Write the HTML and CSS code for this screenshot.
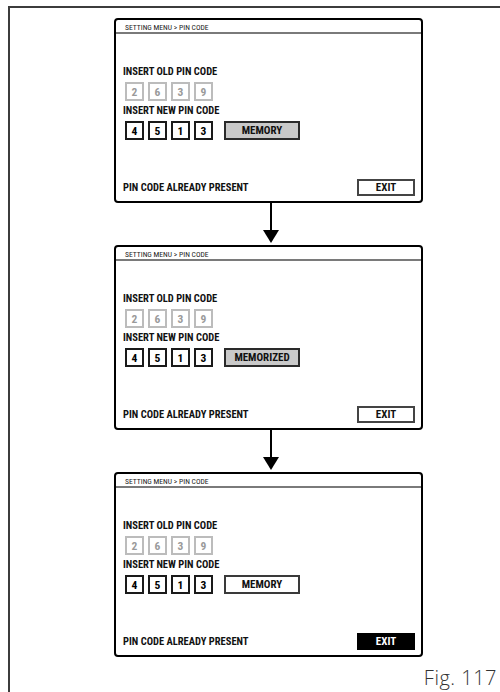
FILE: index.html
```html
<!DOCTYPE html>
<html>
<head>
<meta charset="utf-8">
<link rel="stylesheet" href="styles.css">
</head>
<body>
<div class="frame">
  <div class="column">
    <section class="panel">
      <div class="head">SETTING MENU &gt; PIN CODE</div>
      <div class="body">
        <div class="label first">INSERT OLD PIN CODE</div>
        <div class="row old"><span class="digit">2</span><span class="digit">6</span><span class="digit">3</span><span class="digit">9</span></div>
        <div class="label">INSERT NEW PIN CODE</div>
        <div class="row new"><span class="digit">4</span><span class="digit">5</span><span class="digit">1</span><span class="digit">3</span><span class="btn memory active">MEMORY</span></div>
        <div class="status"><span>PIN CODE ALREADY PRESENT</span><span class="btn exit">EXIT</span></div>
      </div>
    </section>
    <div class="arrow"><svg width="16" height="42" viewBox="0 0 16 42"><line x1="8" y1="0" x2="8" y2="29" stroke="#000" stroke-width="2"/><polygon points="0,27 16,27 8,40" fill="#000"/></svg></div>
    <section class="panel">
      <div class="head">SETTING MENU &gt; PIN CODE</div>
      <div class="body">
        <div class="label first">INSERT OLD PIN CODE</div>
        <div class="row old"><span class="digit">2</span><span class="digit">6</span><span class="digit">3</span><span class="digit">9</span></div>
        <div class="label">INSERT NEW PIN CODE</div>
        <div class="row new"><span class="digit">4</span><span class="digit">5</span><span class="digit">1</span><span class="digit">3</span><span class="btn memory active">MEMORIZED</span></div>
        <div class="status"><span>PIN CODE ALREADY PRESENT</span><span class="btn exit">EXIT</span></div>
      </div>
    </section>
    <div class="arrow"><svg width="16" height="42" viewBox="0 0 16 42"><line x1="8" y1="0" x2="8" y2="29" stroke="#000" stroke-width="2"/><polygon points="0,27 16,27 8,40" fill="#000"/></svg></div>
    <section class="panel">
      <div class="head">SETTING MENU &gt; PIN CODE</div>
      <div class="body">
        <div class="label first">INSERT OLD PIN CODE</div>
        <div class="row old"><span class="digit">2</span><span class="digit">6</span><span class="digit">3</span><span class="digit">9</span></div>
        <div class="label">INSERT NEW PIN CODE</div>
        <div class="row new"><span class="digit">4</span><span class="digit">5</span><span class="digit">1</span><span class="digit">3</span><span class="btn memory">MEMORY</span></div>
        <div class="status"><span>PIN CODE ALREADY PRESENT</span><span class="btn exit selected">EXIT</span></div>
      </div>
    </section>
  </div>
  <div class="caption">Fig. 117</div>
</div>
</body>
</html>
```
FILE: styles.css
```css
html, body {
  margin: 0;
  height: 692px;
  overflow: hidden;
  background: #fff;
}

.frame {
  margin: 6px 0 0 8px;
  height: 686px;
  box-sizing: border-box;
  border-top: 2px solid #3c3c3c;
  border-left: 2px solid #3c3c3c;
  padding: 10px 0 0 104px;
  display: flex;
  flex-direction: column;
}

.column {
  display: flex;
  flex-direction: column;
  width: 309px;
}

.panel {
  box-sizing: border-box;
  height: 185px;
  border: 2px solid #000;
  border-radius: 4px;
  display: flex;
  flex-direction: column;
  font-family: Roboto, "Liberation Sans", sans-serif;
  font-stretch: 75%;
  color: #111;
}

.head {
  height: 9px;
  padding: 3px 0 0 9px;
  line-height: 10px;
  font-size: 7.6px;
  border-bottom: 2px solid #7a7a7a;
  color: #222;
  white-space: nowrap;
}

.body {
  flex: 1;
  display: flex;
  flex-direction: column;
  padding: 0 6px 5px 7px;
}

.label {
  font-size: 10.5px;
  line-height: 12px;
  font-weight: bold;
  margin-top: 4px;
  white-space: nowrap;
}

.label.first {
  margin-top: 32px;
}

.row {
  display: flex;
  gap: 4px;
  margin: 4px 0 0 2px;
}

.digit {
  box-sizing: border-box;
  width: 19px;
  height: 19px;
  display: flex;
  align-items: center;
  justify-content: center;
  font-size: 11.5px;
  font-weight: bold;
}

.old .digit {
  border: 2px solid #bcbcbc;
  color: #9a9a9a;
}

.new .digit {
  border: 2px solid #1a1a1a;
  color: #000;
}

.btn {
  box-sizing: border-box;
  display: flex;
  align-items: center;
  justify-content: center;
  font-size: 11px;
  font-weight: bold;
}

.memory {
  width: 76px;
  height: 19px;
  margin-left: 7px;
  border: 2px solid #3a3a3a;
  background: #fff;
}

.memory.active {
  background: #c9c9c9;
  border-color: #2a2a2a;
}

.status {
  margin-top: auto;
  display: flex;
  justify-content: space-between;
  align-items: center;
  font-size: 10.5px;
  font-weight: bold;
  white-space: nowrap;
}

.exit {
  width: 58px;
  height: 17px;
  border: 2px solid #444;
  background: #fff;
}

.exit.selected {
  background: #000;
  border-color: #000;
  color: #fff;
}

.arrow {
  height: 42px;
  padding-left: 149px;
}

.arrow svg {
  display: block;
}

.caption {
  align-self: flex-end;
  margin: 12px 3px 0 0;
  font-family: "Open Sans", "Liberation Sans", sans-serif;
  font-weight: 300;
  font-size: 20px;
  line-height: 18px;
  letter-spacing: 0.5px;
  color: #333;
}
```
